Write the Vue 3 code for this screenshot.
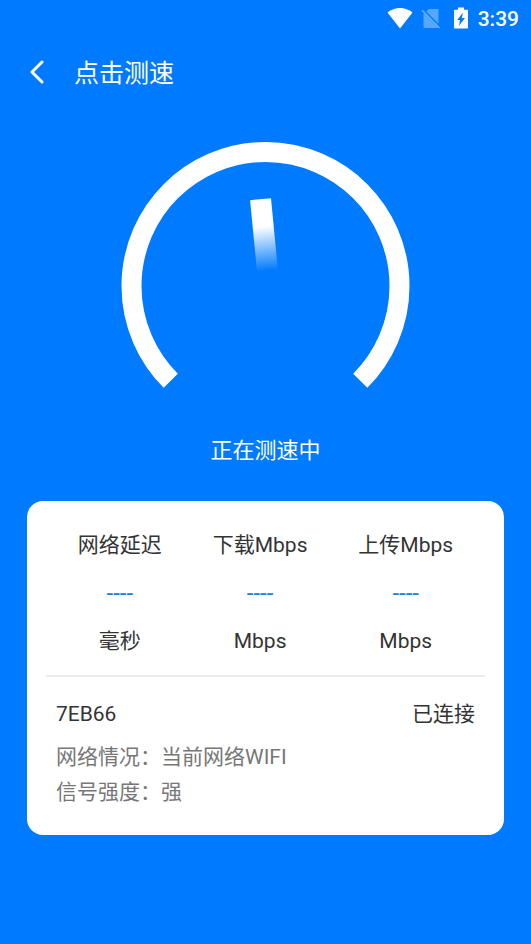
<script setup>
import { ref } from 'vue'

const metrics = ref([
  { label: '网络延迟', value: '----', unit: '毫秒' },
  { label: '下载Mbps', value: '----', unit: 'Mbps' },
  { label: '上传Mbps', value: '----', unit: 'Mbps' },
])
const network = ref({ name: '7EB66', state: '已连接' })
const details = ref([
  { label: '网络情况', value: '当前网络WIFI' },
  { label: '信号强度', value: '强' },
])
</script>

<template>
  <div class="screen">
    <div class="status-bar">
      <svg class="wifi" viewBox="0 0 26 22" aria-hidden="true">
        <path d="M13 21.5 0.5 5.6C4 2.6 8.3 1 13 1s9 1.6 12.5 4.6Z" fill="#fff" />
      </svg>
      <svg class="sim" viewBox="0 0 20 22" aria-hidden="true">
        <path d="M8 2h8.5a1 1 0 0 1 1 1v13.8L5.2 4.6ZM2.5 6 16.8 20.6a1 1 0 0 1-.8.4H3.5a1 1 0 0 1-1-1Z" fill="#fff" fill-opacity=".34" />
        <path d="M1 3.2 18.5 21" stroke="#fff" stroke-opacity=".42" stroke-width="1.6" />
      </svg>
      <svg class="battery" viewBox="0 0 14 22" aria-hidden="true">
        <path fill="#fff" fill-rule="evenodd" d="M4 0.500h6v2.200h3a1 1 0 0 1 1 1V20.500a1 1 0 0 1-1 1H1a1 1 0 0 1-1-1V3.700a1 1 0 0 1 1-1h3ZM9 5.500 3.200 13h3l-1.400 6L11 11h-3.200Z" />
      </svg>
      <time class="clock">3:39</time>
    </div>

    <header class="title-bar">
      <button class="back" type="button" aria-label="返回">
        <svg viewBox="0 0 16 24" aria-hidden="true">
          <path d="M13 2 3 12 13 22" fill="none" stroke="#fff" stroke-width="3" stroke-linecap="round" stroke-linejoin="round" />
        </svg>
      </button>
      <h1>点击测速</h1>
    </header>

    <main>
      <svg class="gauge" viewBox="-0.5 0 289 248" aria-hidden="true">
        <defs>
          <linearGradient id="needle" x1="0" y1="0" x2="0" y2="1">
            <stop offset="0.38" stop-color="#fff" />
            <stop offset="1" stop-color="#fff" stop-opacity="0" />
          </linearGradient>
        </defs>
        <path d="M49.250 239.750A134 134 0 1 1 238.750 239.750" fill="none" stroke="#fff" stroke-width="20" />
        <rect x="132" y="58" width="21" height="72" fill="url(#needle)" transform="rotate(-5.500 142.500 94)" />
      </svg>
      <p class="progress">正在测速中</p>

      <section class="card">
        <div class="metrics">
          <dl v-for="m in metrics" :key="m.label" class="metric">
            <dt>{{ m.label }}</dt>
            <dd class="value">{{ m.value }}</dd>
            <dd>{{ m.unit }}</dd>
          </dl>
        </div>
        <hr />
        <div class="network">
          <div class="connection">
            <span>{{ network.name }}</span>
            <span>{{ network.state }}</span>
          </div>
          <p v-for="d in details" :key="d.label" class="detail">{{ d.label }}：{{ d.value }}</p>
        </div>
      </section>
    </main>
  </div>
</template>

<style>
body {
  margin: 0;
  background: #007aff;
}
</style>

<style scoped>
.screen {
  min-height: 100vh;
  box-sizing: border-box;
  background: #007aff;
  color: #fff;
  font-family: Roboto, "Noto Sans CJK SC", sans-serif;
}
h1, p, dl, dd {
  margin: 0;
}
.status-bar {
  display: flex;
  align-items: center;
  justify-content: flex-end;
  height: 36px;
  padding-right: 12px;
}
.wifi {
  width: 26px;
  height: 22px;
  margin-right: 8px;
}
.sim {
  width: 20px;
  height: 22px;
  margin-right: 13px;
}
.battery {
  width: 14px;
  height: 22px;
  margin-right: 10px;
}
.clock {
  padding-top: 2px;
  font-size: 21px;
  font-weight: 500;
  line-height: 24px;
}
.title-bar {
  display: flex;
  align-items: center;
  gap: 16px;
  height: 72px;
  padding-left: 16px;
}
.back {
  display: flex;
  align-items: center;
  justify-content: center;
  width: 42px;
  height: 48px;
  padding: 0;
  border: 0;
  background: none;
  cursor: pointer;
}
.back svg {
  width: 16px;
  height: 24px;
}
h1 {
  padding-top: 4px;
  font-size: 25px;
  font-weight: 400;
  line-height: 36px;
}
main {
  display: flex;
  flex-direction: column;
  padding: 33px 27px 24px;
}
.gauge {
  align-self: center;
  width: 289px;
  height: 248px;
}
.progress {
  margin-top: 46px;
  font-size: 22px;
  line-height: 32px;
  text-align: center;
}
.card {
  margin-top: 34px;
  padding: 28px 0 25px;
  border-radius: 16px;
  background: #fff;
  color: #333;
  font-size: 21px;
  line-height: 32px;
}
.metrics {
  display: flex;
  justify-content: space-evenly;
}
.metric {
  display: flex;
  flex-direction: column;
  gap: 16px;
  text-align: center;
}
.value {
  color: #1a7fd4;
  font-size: 24px;
}
hr {
  height: 2px;
  margin: 18px 19px 21px;
  border: 0;
  background: #ececec;
}
.network {
  padding: 0 29px;
}
.connection {
  display: flex;
  justify-content: space-between;
  margin-bottom: 10px;
}
.detail {
  color: #777;
  line-height: 35px;
}
</style>
